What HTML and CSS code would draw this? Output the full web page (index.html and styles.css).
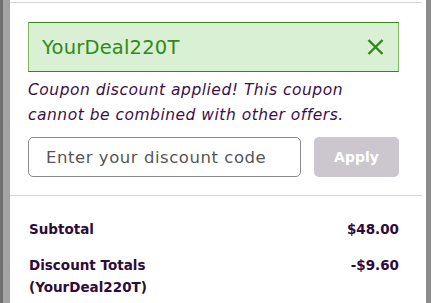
FILE: index.html
```html
<!DOCTYPE html>
<html>
<head>
<meta charset="utf-8">
<link rel="stylesheet" href="styles.css">
</head>
<body>
<div class="page">
  <div class="backdrop-left"></div>
  <div class="panel">
    <div class="divider top"></div>
    <div class="content">
      <div class="coupon">
        <span class="coupon-code">YourDeal220T</span>
        <svg class="close" width="17" height="16" viewBox="0 0 17 16"><path d="M1.5 1 L15.5 15 M15.5 1 L1.5 15" stroke="#2f8a17" stroke-width="2.4" fill="none"/></svg>
      </div>
      <p class="notice">Coupon discount applied! This coupon cannot be combined with other offers.</p>
      <div class="code-row">
        <input class="code-input" type="text" placeholder="Enter your discount code">
        <button class="apply">Apply</button>
      </div>
    </div>
    <div class="divider"></div>
    <div class="totals">
      <div class="row"><span>Subtotal</span><span>$48.00</span></div>
      <div class="row"><span>Discount Totals<br>(YourDeal220T)</span><span>-$9.60</span></div>
    </div>
  </div>
  <div class="backdrop-right"></div>
</div>
</body>
</html>
```

FILE: styles.css
```css
html, body {
  margin: 0;
  padding: 0;
  height: 303px;
  overflow: hidden;
}
body {
  font-family: "DejaVu Sans", "Open Sans", sans-serif;
  color: #2e0b3b;
}
.page {
  display: flex;
  height: 303px;
}
.backdrop-left {
  width: 10px;
  flex: none;
  background: linear-gradient(to right, #6f6f6f 0, #6f6f6f 3px, #a3a3a3 3px, #a3a3a3 10px);
}
.backdrop-right {
  width: 5px;
  flex: none;
  background: #8c8c8c;
}
.panel {
  width: 412px;
  flex: none;
  background: #fff;
  padding-right: 4px;
  padding-top: 2px;
}
.divider {
  height: 1px;
  background: #d6d6d6;
}
.content {
  padding: 19px 23px 18px 18px;
}
.coupon {
  display: flex;
  align-items: center;
  justify-content: space-between;
  height: 48px;
  box-sizing: content-box;
  background: #daf0d4;
  border-top: 1px solid #2f8a0f;
  border-bottom: 1px solid #2f8a0f;
  border-left: 1px solid #7dba5f;
  border-right: 1px solid #7dba5f;
  padding: 0 14px 0 13px;
}
.coupon-code {
  font-size: 19.5px;
  color: #2f8a17;
  letter-spacing: 0.2px;
}
.close {
  display: block;
}
.notice {
  margin: 6px 0 0;
  max-width: 335px;
  font-size: 15.5px;
  letter-spacing: 0.5px;
  line-height: 25px;
  font-style: italic;
  color: #3d0f4a;
}
.code-row {
  display: flex;
  gap: 13px;
  margin-top: 9px;
}
.code-input {
  width: 273px;
  height: 40px;
  box-sizing: border-box;
  border: 1px solid #8a8a8a;
  border-radius: 5px;
  padding: 0 17px;
  font-family: inherit;
  font-size: 16.5px;
  letter-spacing: 0.55px;
  color: #555;
  background: #fff;
  outline: none;
}
.code-input::placeholder {
  color: #555;
}
.apply {
  width: 85px;
  height: 40px;
  border: none;
  border-radius: 5px;
  background: #ccc7ce;
  color: #fff;
  font-family: inherit;
  font-weight: bold;
  font-size: 14px;
  padding: 0;
}
.totals {
  padding: 22px 23px 0 19px;
  display: flex;
  flex-direction: column;
  gap: 14px;
}
.row {
  display: flex;
  justify-content: space-between;
  align-items: flex-start;
  font-size: 13.5px;
  font-weight: bold;
  line-height: 22px;
  color: #2e0b3b;
}
```
